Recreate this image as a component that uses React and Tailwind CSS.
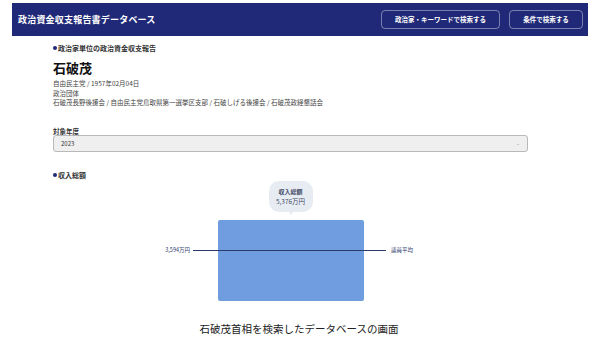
import React from 'react';

// Database screen: header bar, politician profile, year selector, income chart
function Header() {
  return (
    <div className="mx-[12px] mt-[3px] h-[33px] bg-[#1f2977] flex items-center justify-between pl-[6px] pr-[5px]">
      <h1 className="text-[9px] font-bold text-white tracking-[0.2px]">政治資金収支報告書データベース</h1>
      <div className="flex items-center gap-[9px]">
        <button className="w-[119px] h-[19px] rounded-[4px] border border-white/40 text-[6.5px] font-bold text-white">
          政治家・キーワードで検索する
        </button>
        <button className="w-[74px] h-[19px] rounded-[4px] border border-white/40 text-[6.5px] font-bold text-white">
          条件で検索する
        </button>
      </div>
    </div>
  );
}

function SectionLabel({ children }) {
  return (
    <div className="flex items-center text-[7px] font-bold text-[#333] leading-[8px]">
      <span className="w-[4px] h-[4px] rounded-full bg-[#1f2977] mr-[1px]" />
      {children}
    </div>
  );
}

function IncomeChart() {
  return (
    <div className="relative mt-[2px] w-full flex flex-col items-center">
      {/* bubble with total */}
      <div className="relative w-[44px] h-[31px] rounded-[10px] bg-[#e7ecf3] flex flex-col items-center justify-center text-[#3d4a66]">
        <span className="text-[6px] font-bold leading-[9px]">収入総額</span>
        <span className="text-[6.5px] leading-[10px]">5,376万円</span>
        <span className="absolute bottom-[-3px] left-1/2 -translate-x-1/2 w-0 h-0 border-l-[3px] border-r-[3px] border-t-[4px] border-l-transparent border-r-transparent border-t-[#e7ecf3]" />
      </div>
      <div className="mt-[8px] w-[146px] h-[81px] rounded-[2px] bg-[#6f9de0]" />
      {/* average line over the bar */}
      <div className="absolute left-0 right-0 top-[66px] h-[7px] flex items-center justify-center">
        <span className="text-[5.5px] text-[#2c3a6b] w-[30px] text-right mr-[3px] leading-[7px]">3,594万円</span>
        <span className="w-[193px] h-px bg-[#2c3a6b]" />
        <span className="text-[5.5px] text-[#2c3a6b] w-[30px] ml-[5px] leading-[7px]">議員平均</span>
      </div>
    </div>
  );
}

export default function App() {
  return (
    <div
      className="w-[600px] h-[341px] bg-white overflow-hidden"
      style={{ fontFamily: '"Noto Sans CJK JP", "Noto Sans", sans-serif' }}
    >
      <Header />
      <div className="pl-[53px] pr-[72px] pt-[8px]">
        <SectionLabel>政治家単位の政治資金収支報告</SectionLabel>
        <h2 className="mt-[8px] text-[13px] font-bold text-[#111] leading-[16px]">石破茂</h2>
        <div className="mt-[3px] text-[6.5px] text-[#444] leading-[9.5px]">
          <p>自由民主党 / 1957年02月04日</p>
          <p>政治団体</p>
          <p>石破茂長野後援会 / 自由民主党鳥取県第一選挙区支部 / 石破しげる後援会 / 石破茂政経懇話会</p>
        </div>
        <div className="mt-[19px] text-[6.5px] font-bold text-[#333] leading-[8px]">対象年度</div>
        <div className="mt-0 w-[475px] h-[17px] rounded-[3px] border border-[#b9b9b9] bg-[#efefef] flex items-center justify-between px-[7px]">
          <span className="text-[6px] text-[#333]">2023</span>
          <span className="text-[5px] text-[#999]">⌄</span>
        </div>
        <div className="mt-[19px]">
          <SectionLabel>収入総額</SectionLabel>
        </div>
        <IncomeChart />
      </div>
      <p className="mt-[21px] text-center pr-[2px] text-[10.5px] text-[#222] leading-[14px]">
        石破茂首相を検索したデータベースの画面
      </p>
    </div>
  );
}
